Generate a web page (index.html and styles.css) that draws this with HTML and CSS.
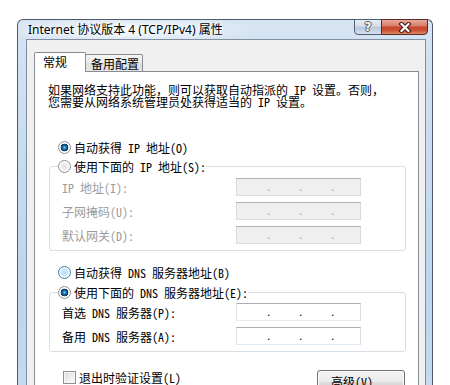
FILE: index.html
```html
<!DOCTYPE html>
<html lang="zh-CN">
<head>
<meta charset="utf-8">
<title>Internet 协议版本 4 (TCP/IPv4) 属性</title>
<link rel="stylesheet" href="styles.css">
</head>
<body>
<div class="window">
  <div class="titlebar">
    <span class="title">Internet 协议版本 4 (TCP/IPv4) 属性</span>
    <div class="caption-btns">
      <span class="cbtn help">?</span>
      <span class="cbtn close"><svg width="14" height="11" viewBox="0 0 14 11"><path d="M3.5 2 L10.5 9 M10.5 2 L3.5 9" stroke="#3d1410" stroke-width="4.2" stroke-linecap="square" fill="none"/><path d="M3.5 2 L10.5 9 M10.5 2 L3.5 9" stroke="#ffffff" stroke-width="2.2" stroke-linecap="square" fill="none"/></svg></span>
    </div>
  </div>
  <div class="frame">
    <div class="client">
      <div class="tabs">
        <div class="tab active">常规</div>
        <div class="tab inactive">备用配置</div>
      </div>
      <div class="panel">
        <p class="intro">如果网络支持此功能，则可以获取自动指派的 IP 设置。否则，<br>您需要从网络系统管理员处获得适当的 IP 设置。</p>
        <div class="opt opt-ip"><span class="radio checked"></span><span>自动获得 IP 地址(O)</span></div>
        <fieldset class="group group-ip">
          <legend><span class="opt-in"><span class="radio"></span><span>使用下面的 IP 地址(S):</span></span></legend>
          <div class="field disabled"><span class="lbl">IP 地址(I):</span><span class="ipbox"><span class="dot">.</span><span class="dot">.</span><span class="dot">.</span></span></div>
          <div class="field disabled"><span class="lbl">子网掩码(U):</span><span class="ipbox"><span class="dot">.</span><span class="dot">.</span><span class="dot">.</span></span></div>
          <div class="field disabled"><span class="lbl">默认网关(D):</span><span class="ipbox"><span class="dot">.</span><span class="dot">.</span><span class="dot">.</span></span></div>
        </fieldset>
        <div class="opt opt-dns"><span class="radio hover"></span><span>自动获得 DNS 服务器地址(B)</span></div>
        <fieldset class="group group-dns">
          <legend><span class="opt-in"><span class="radio checked"></span><span>使用下面的 DNS 服务器地址(E):</span></span></legend>
          <div class="field"><span class="lbl">首选 DNS 服务器(P):</span><span class="ipbox"><span class="dot">.</span><span class="dot">.</span><span class="dot">.</span></span></div>
          <div class="field"><span class="lbl">备用 DNS 服务器(A):</span><span class="ipbox"><span class="dot">.</span><span class="dot">.</span><span class="dot">.</span></span></div>
        </fieldset>
        <div class="bottom">
          <div class="check-row"><span class="checkbox"></span><span>退出时验证设置(L)</span></div>
          <span class="button">高级(V)...</span>
        </div>
      </div>
    </div>
  </div>
</div>
</body>
</html>
```
FILE: styles.css
```css
html, body {
  margin: 0;
  padding: 0;
}
body {
  background: #ffffff;
  height: 385px;
  overflow: hidden;
  font-family: "Noto Sans Mono CJK SC", "Noto Sans CJK SC", "Liberation Mono", monospace;
  font-size: 12px;
  color: #000;
}

.window {
  margin: 19px 0 0 17px;
  width: 416px;
  box-sizing: border-box;
  border: 1px solid #4d5866;
  border-bottom: none;
  border-radius: 6px 6px 0 0;
  background: linear-gradient(180deg, #d6e4f3 0%, #c8dbef 30%, #bfd5ee 60%, #cadcf0 100%);
}

.titlebar {
  height: 19px;
  display: flex;
  align-items: flex-start;
  padding: 0 4px 0 10px;
  background: radial-gradient(ellipse 130px 14px at 110px 10px, rgba(255,255,255,0.85), rgba(255,255,255,0) 100%);
}
.title {
  line-height: 19px;
  font-family: "Noto Sans", "Noto Sans CJK SC", sans-serif;
  font-size: 12px;
  color: #000;
  text-shadow: 0 0 6px rgba(255,255,255,0.9), 0 0 3px rgba(255,255,255,0.9);
  white-space: nowrap;
}
.caption-btns {
  margin-left: auto;
  margin-top: -1px;
  display: flex;
}
.cbtn {
  height: 16px;
  box-sizing: border-box;
  border: 1px solid #505f72;
  display: flex;
  align-items: center;
  justify-content: center;
}
.help {
  width: 28px;
  border-radius: 0 0 0 4px;
  background: linear-gradient(180deg, #e6edf6 0%, #d3dde9 45%, #b9c8da 50%, #c7d4e3 80%, #d9e3ef 100%);
  color: #ffffff;
  font-family: "DejaVu Sans", sans-serif;
  font-weight: bold;
  font-size: 12px;
  line-height: 14px;
  text-shadow: 0 0 1px #2c3440, 1px 0 0 #59636f, -1px 0 0 #59636f, 0 1px 0 #59636f, 0 -1px 0 #59636f;
}
.close {
  width: 47px;
  margin-left: -1px;
  border-radius: 0 0 4px 0;
  border-color: #5a2a24;
  background: linear-gradient(180deg, #e8a999 0%, #d9806c 40%, #c5452d 52%, #cb5236 75%, #de8a68 100%);
}

.frame {
  padding: 0 6px 0 8px;
}
.client {
  border: 1px solid #7f8ea0;
  border-bottom: none;
  background: #f0f0f0;
  padding: 12px 6px 40px 7px;
}

.tabs {
  display: flex;
  align-items: flex-end;
  height: 19px;
}
.tab {
  box-sizing: border-box;
  border: 1px solid #898c95;
  border-bottom: none;
  white-space: nowrap;
}
.tab.active {
  width: 52px;
  height: 20px;
  margin-bottom: -1px;
  background: #ffffff;
  position: relative;
  z-index: 1;
  padding-left: 8px;
  line-height: 18px;
  border-radius: 2px 2px 0 0;
}
.tab.inactive {
  width: 58px;
  height: 17px;
  margin-left: -1px;
  background: linear-gradient(180deg, #f4f4f4 0%, #ebebeb 50%, #dddddd 51%, #e6e6e6 100%);
  padding-left: 5px;
  line-height: 17px;
  border-radius: 2px 2px 0 0;
}

.panel {
  border: 1px solid #898c95;
  background: #ffffff;
  padding-top: 12px;
  height: 340px;
}
.intro {
  margin: 0 0 0 13px;
  line-height: 12px;
  white-space: nowrap;
}

.opt {
  display: flex;
  align-items: center;
  gap: 3px;
  height: 16px;
  white-space: nowrap;
}
.opt-ip {
  margin: 31px 0 0 23px;
}
.opt-dns {
  margin: 13px 0 0 23px;
}
.opt-in {
  display: flex;
  align-items: center;
  gap: 3px;
  height: 16px;
  white-space: nowrap;
  background: #fff;
}

.radio {
  width: 13px;
  height: 13px;
  box-sizing: border-box;
  border-radius: 50%;
  border: 1px solid #8e8f8f;
  background: radial-gradient(circle at 50% 50%, #e4e4e4 0, #f4f4f4 60%, #fbfbfb 100%);
  box-shadow: inset 0 0 0 1px #ffffff;
  flex: none;
}
.radio.checked {
  background:
    radial-gradient(circle at 50% 50%, #6ad0ff 0, #1d79b8 1.6px, #0c3f6e 3.2px, #123d61 3.6px, rgba(255,255,255,0) 4.1px),
    radial-gradient(circle at 50% 50%, #d8d8d8 0, #f2f2f2 70%, #fafafa 100%);
}
.radio.hover {
  border-color: #3c7fb1;
  background: radial-gradient(circle at 50% 50%, #b6dcf6 0, #d9eefb 60%, #eef8fe 100%);
}

.group {
  width: 357px;
  box-sizing: border-box;
  border: 1px solid #d5dfe5;
  border-radius: 3px;
  padding: 4px 0 6px 12px;
  min-width: 0;
  margin-right: 0;
}
.group-ip {
  margin: 3px 0 0 14px;
}
.group-dns {
  margin: 4px 0 0 14px;
  padding-top: 3px;
}
.group legend {
  padding: 0;
  margin-left: -4px;
}

.field {
  display: flex;
  align-items: center;
  height: 18px;
  white-space: nowrap;
}
.field + .field {
  margin-top: 6px;
}
.lbl {
  width: 174px;
  flex: none;
}
.field.disabled .lbl {
  color: #9c9c9c;
}
.ipbox {
  width: 125px;
  height: 18px;
  box-sizing: border-box;
  border: 1px solid;
  border-color: #abadb3 #dbdfe6 #e3e9ef #e2e3ea;
  background: #ffffff;
  display: flex;
  padding-left: 30px;
  gap: 29px;
  line-height: 16px;
}
.field.disabled .ipbox {
  background: #efefef;
  border-color: #afb3b8 #d7d9dc #dedfe1 #d7d9dc;
  color: #a8a8a8;
}
.dot {
  width: 3px;
  text-align: center;
  font-family: "Liberation Sans", sans-serif;
}

.bottom {
  display: flex;
  justify-content: space-between;
  align-items: flex-start;
  margin: 18px 0 0 28px;
  width: 342px;
}
.check-row {
  display: flex;
  align-items: center;
  gap: 3px;
  height: 13px;
  margin-top: 1px;
  white-space: nowrap;
  line-height: 13px;
}
.checkbox {
  width: 13px;
  height: 13px;
  box-sizing: border-box;
  border: 1px solid #8e8f8f;
  background: linear-gradient(135deg, #d9d9d9 0%, #eeeeee 55%, #fbfbfb 100%);
  box-shadow: inset 0 0 0 1px #f6f6f6;
  flex: none;
}
.button {
  width: 88px;
  height: 23px;
  box-sizing: border-box;
  border: 1px solid #707070;
  border-radius: 3px;
  background: linear-gradient(180deg, #f2f2f2 0%, #ebebeb 50%, #dddddd 51%, #cfcfcf 100%);
  box-shadow: inset 0 0 0 1px #fcfcfc;
  text-align: center;
  line-height: 21px;
  white-space: nowrap;
}
```
